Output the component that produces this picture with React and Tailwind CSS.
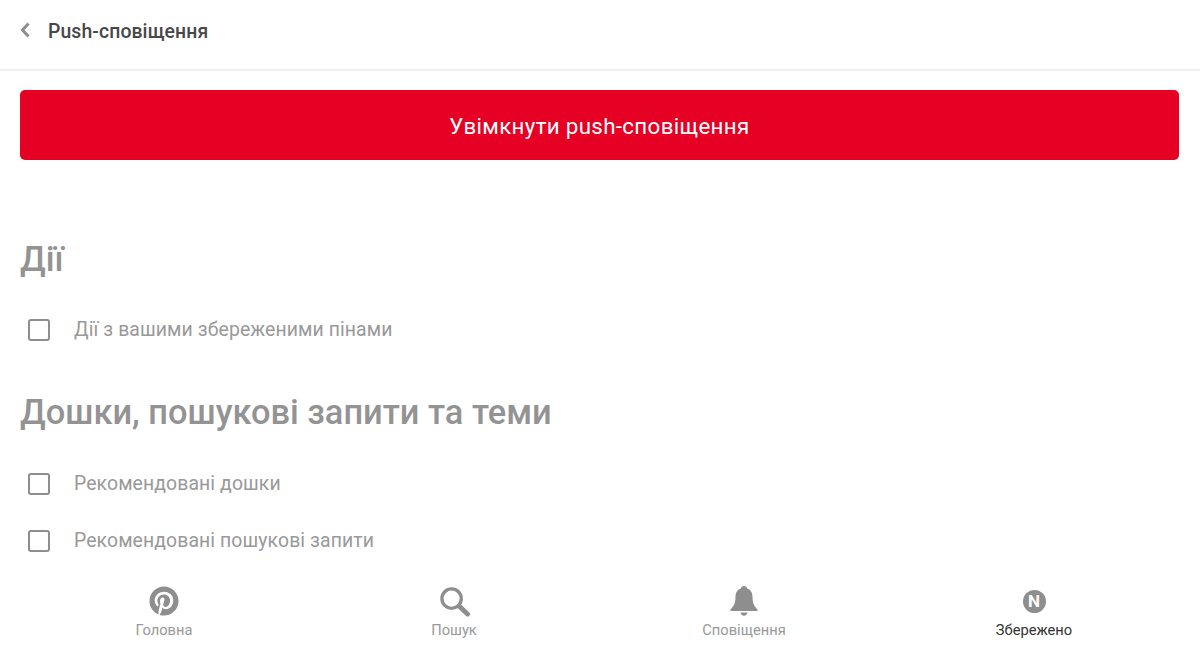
import React from 'react'
import { FaPinterest } from 'react-icons/fa'

const GRAY = 'text-[#939393]'

function Checkbox() {
  return <span className="w-[22px] h-[22px] shrink-0 rounded-[3px] border-2 border-[#8e8e8e] bg-white" />
}

function Option({ label, className = '' }) {
  return (
    <label className={`flex items-center h-[24px] pl-[28px] ${className}`}>
      <Checkbox />
      <span className="ml-[24px] text-[19.4px] leading-[24px] tracking-[0.1px] text-[#999999]">{label}</span>
    </label>
  )
}

function SearchIcon() {
  return (
    <svg width="31" height="31" viewBox="0 0 32 32" fill="none" stroke="#8e8e8e">
      <circle cx="13" cy="13" r="10" strokeWidth="3.4" />
      <path d="M21 21l8.4 8" strokeWidth="5" strokeLinecap="round" />
    </svg>
  )
}

function BellIcon() {
  return (
    <svg width="28" height="32" viewBox="0 0 28 32" fill="#8e8e8e">
      <path d="M14 1c1.8 0 3 1.2 3.1 2.6C21 4.8 22.500 8 22.500 12c0 5.500 1.500 9 5 12.500v1.500H.5v-1.500c3.500-3.500 5-7 5-12.500 0-4 1.500-7.200 5.400-8.400C11 2.200 12.200 1 14 1z" />
      <path d="M10.500 27.500h7c-.4 2-1.700 3.200-3.500 3.200s-3.100-1.200-3.500-3.200z" />
    </svg>
  )
}

function SavedIcon() {
  return (
    <span className="w-[23px] h-[23px] rounded-full bg-[#8e8e8e] flex items-center justify-center text-white text-[17px] font-bold leading-none">
      N
    </span>
  )
}

function NavItem({ icon, label, active }) {
  return (
    <div className="flex flex-col items-center">
      <div className="h-[32px] flex items-center justify-center">{icon}</div>
      <span className={`mt-[4px] text-[14.7px] leading-[18px] ${active ? 'text-[#333333]' : 'text-[#999999]'}`}>{label}</span>
    </div>
  )
}

export default function App() {
  return (
    <div className="w-[1200px] h-[647px] bg-white flex flex-col overflow-hidden font-['Roboto',sans-serif]">
      {/* Header */}
      <header className="h-[71px] shrink-0 flex items-center border-b-2 border-[#efefef] pl-[20px] pb-[9px]">
        <svg width="10" height="16" viewBox="0 0 10 16" fill="none" stroke="#8e8e8e" strokeWidth="3">
          <path d="M8.500 1.500L2.500 8l6 6.500" />
        </svg>
        <h1 className="ml-[18px] mt-[3px] text-[19.4px] font-medium text-[#484848] tracking-[0.1px]">Push-сповіщення</h1>
      </header>

      {/* Content */}
      <main className="flex-1 min-h-0 overflow-hidden px-[20px] pt-[19px]">
        <button className="w-[1159px] h-[70px] pt-[3px] rounded-[5px] bg-[#e60023] text-white text-[22.3px] tracking-[0.35px]">
          Увімкнути push-сповіщення
        </button>

        <h2 className={`mt-[77px] text-[34.4px] leading-[44px] font-medium ${GRAY}`}>Дії</h2>
        <Option label="Дії з вашими збереженими пінами" className="-ml-[20px] mt-[37px]" />

        <h2 className={`mt-[48px] text-[34.4px] leading-[44px] font-medium ${GRAY}`}>Дошки, пошукові запити та теми</h2>
        <Option label="Рекомендовані дошки" className="-ml-[20px] mt-[38px]" />
        <Option label="Рекомендовані пошукові запити" className="-ml-[20px] mt-[33px]" />
      </main>

      {/* Bottom nav */}
      <nav className="h-[72px] shrink-0 bg-white grid grid-cols-[290px_290px_290px_290px] pl-[19px] pt-[10px]">
        <NavItem icon={<FaPinterest size={30} color="#8e8e8e" />} label="Головна" />
        <NavItem icon={<SearchIcon />} label="Пошук" />
        <NavItem icon={<BellIcon />} label="Сповіщення" />
        <NavItem icon={<SavedIcon />} label="Збережено" active />
      </nav>
    </div>
  )
}
